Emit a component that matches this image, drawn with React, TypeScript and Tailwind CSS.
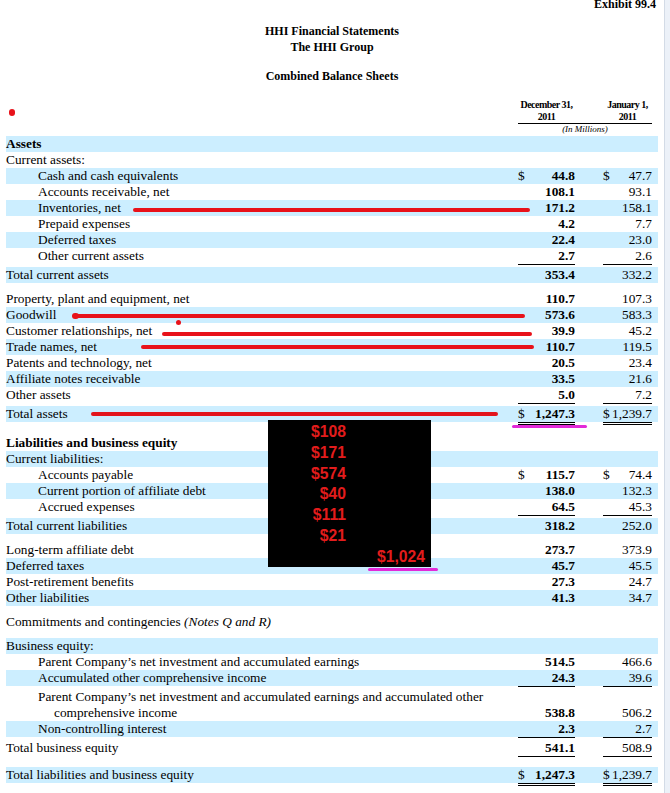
import React from "react";
import clsx from "clsx";

type Line = {
  label: React.ReactNode;
  indent?: boolean;
  bold?: boolean;
  blue?: boolean;
  a?: string;
  b?: string;
  dollar?: boolean;
  under?: "single" | "double";
  mt?: string;
  tall?: boolean;
};

const lines: Line[] = [
  { label: "Assets", bold: true, blue: true, mt: "mt-px" },
  { label: "Current assets:" },
  { label: "Cash and cash equivalents", indent: true, blue: true, a: "44.8", b: "47.7", dollar: true },
  { label: "Accounts receivable, net", indent: true, a: "108.1", b: "93.1" },
  { label: "Inventories, net", indent: true, blue: true, a: "171.2", b: "158.1" },
  { label: "Prepaid expenses", indent: true, a: "4.2", b: "7.7" },
  { label: "Deferred taxes", indent: true, blue: true, a: "22.4", b: "23.0" },
  { label: "Other current assets", indent: true, a: "2.7", b: "2.6", under: "single" },
  { label: "Total current assets", blue: true, a: "353.4", b: "332.2", mt: "mt-[2px]" },
  { label: "Property, plant and equipment, net", a: "110.7", b: "107.3", mt: "mt-2" },
  { label: "Goodwill", blue: true, a: "573.6", b: "583.3" },
  { label: "Customer relationships, net", a: "39.9", b: "45.2" },
  { label: "Trade names, net", blue: true, a: "110.7", b: "119.5" },
  { label: "Patents and technology, net", a: "20.5", b: "23.4" },
  { label: "Affiliate notes receivable", blue: true, a: "33.5", b: "21.6" },
  { label: "Other assets", a: "5.0", b: "7.2", under: "single" },
  { label: "Total assets", blue: true, a: "1,247.3", b: "1,239.7", dollar: true, under: "double", mt: "mt-[2px]" },
  { label: "Liabilities and business equity", bold: true, mt: "mt-[10px]" },
  { label: "Current liabilities:", blue: true },
  { label: "Accounts payable", indent: true, a: "115.7", b: "74.4", dollar: true },
  { label: "Current portion of affiliate debt", indent: true, blue: true, a: "138.0", b: "132.3" },
  { label: "Accrued expenses", indent: true, a: "64.5", b: "45.3", under: "single" },
  { label: "Total current liabilities", blue: true, a: "318.2", b: "252.0", mt: "mt-[2px]" },
  { label: "Long-term affiliate debt", a: "273.7", b: "373.9", mt: "mt-2" },
  { label: "Deferred taxes", blue: true, a: "45.7", b: "45.5" },
  { label: "Post-retirement benefits", a: "27.3", b: "24.7" },
  { label: "Other liabilities", blue: true, a: "41.3", b: "34.7" },
  {
    label: (
      <>
        Commitments and contingencies <i>(Notes Q and R)</i>
      </>
    ),
    mt: "mt-2",
  },
  { label: "Business equity:", blue: true, mt: "mt-2" },
  { label: "Parent Company’s net investment and accumulated earnings", indent: true, a: "514.5", b: "466.6" },
  { label: "Accumulated other comprehensive income", indent: true, blue: true, a: "24.3", b: "39.6", under: "single" },
  {
    label: (
      <>
        Parent Company’s net investment and accumulated earnings and accumulated other
        <br />
        comprehensive income
      </>
    ),
    indent: true,
    tall: true,
    a: "538.8",
    b: "506.2",
    mt: "mt-[2px]",
  },
  { label: "Non-controlling interest", indent: true, blue: true, a: "2.3", b: "2.7", under: "single" },
  { label: "Total business equity", a: "541.1", b: "508.9", under: "single", mt: "mt-[2px]" },
  {
    label: "Total liabilities and business equity",
    blue: true,
    a: "1,247.3",
    b: "1,239.7",
    dollar: true,
    under: "double",
    mt: "mt-[10px]",
  },
];

function Rule({ double }: { double: boolean }) {
  const seg = double ? "h-[3px] border-y border-black" : "h-px bg-black";
  return (
    <div className="flex">
      <div className="flex-1" />
      <div className={clsx("w-[57px]", seg)} />
      <div className="w-[28px]" />
      <div className={clsx("w-[49px]", seg)} />
      <div className="w-[6px]" />
    </div>
  );
}

function Row({ l }: { l: Line }) {
  return (
    <div className={l.mt}>
      <div
        className={clsx(
          "flex leading-4",
          l.tall ? "h-8 items-end" : "h-4 items-center",
          l.blue && "bg-[#cceeff]"
        )}
      >
        <div
          className={clsx(
            "flex-1 whitespace-nowrap",
            l.indent && (l.tall ? "pl-[48px] -indent-[16px]" : "pl-8"),
            l.bold && "font-bold"
          )}
        >
          {l.label}
        </div>
        <div className="flex w-[57px] justify-between">
          <span>{l.dollar ? "$" : ""}</span>
          <span className="font-bold">{l.a}</span>
        </div>
        <div className="w-[28px]" />
        <div className="flex w-[49px] justify-between">
          <span>{l.dollar ? "$" : ""}</span>
          <span>{l.b}</span>
        </div>
        <div className="w-[6px]" />
      </div>
      {l.under && <Rule double={l.under === "double"} />}
    </div>
  );
}

function Marks() {
  return (
    <>
      <div className="absolute left-[9px] top-[109px] h-[7px] w-[6px] rounded-full bg-[#e8121a]" />
      <div className="absolute left-[133px] top-[208px] h-1 w-[397px] rounded-full bg-[#e8121a]" />
      <div className="absolute left-[72px] top-[313px] h-[6px] w-[7px] rounded-full bg-[#e8121a]" />
      <div className="absolute left-[74px] top-[314px] h-1 w-[451px] rounded-full bg-[#e8121a]" />
      <div className="absolute left-[176px] top-[320px] h-[5px] w-[5px] rounded-full bg-[#e8121a]" />
      <div className="absolute left-[162px] top-[332px] h-1 w-[370px] rounded-full bg-[#e8121a]" />
      <div className="absolute left-[141px] top-[345px] h-1 w-[393px] rounded-full bg-[#e8121a]" />
      <div className="absolute left-[91px] top-[412px] h-1 w-[407px] rounded-full bg-[#e3141c]" />
      <div className="absolute left-[512px] top-[425px] h-[3px] w-[75px] rounded-full bg-[#e22ad8]" />

      <div className="absolute left-[268px] top-[420px] h-[147px] w-[163px] bg-black pt-[2px] font-['Liberation_Sans',sans-serif] text-[15.7px] font-bold leading-[20.8px] text-[#e31c1c]">
        <div className="w-[78px] text-right">
          <div>$108</div>
          <div>$171</div>
          <div>$574</div>
          <div>$40</div>
          <div>$111</div>
          <div>$21</div>
        </div>
        <div className="pr-[6px] text-right">$1,024</div>
      </div>
      <div className="absolute left-[368px] top-[568px] h-[3px] w-[70px] rounded-full bg-[#e22ad8]" />
    </>
  );
}

export default function App() {
  return (
    <div className="relative flex h-[793px] w-[670px] overflow-hidden bg-white font-['Liberation_Serif',serif] text-[10pt] text-black">
      <div className="w-[664px] px-[6px]">
        <p className="-mt-[3px] pr-[2px] text-right text-[12px] font-bold leading-[14px]">Exhibit 99.4</p>
        <div className="mt-3 text-center text-[12px] font-bold leading-4">
          <p>HHI Financial Statements</p>
          <p>The HHI Group</p>
          <p className="mt-[13px]">Combined Balance Sheets</p>
        </div>

        <div className="mt-[15px] flex">
          <div className="flex-1" />
          <div className="w-[134px]">
            <div className="flex border-b border-black text-[10px] font-bold leading-3 tracking-[-0.5px]">
              <div className="w-[57px] text-center">
                December 31,
                <br />
                2011
              </div>
              <div className="w-[28px]" />
              <div className="w-[49px] text-center">
                January 1,
                <br />
                2011
              </div>
            </div>
            <p className="text-center text-[9px] italic leading-[11px]">(In Millions)</p>
          </div>
          <div className="w-[6px]" />
        </div>

        {lines.map((l, i) => (
          <Row key={i} l={l} />
        ))}
      </div>
      <div className="w-[6px] border-l border-[#d3dbe6] bg-[#ecf1f8]" />
      <Marks />
    </div>
  );
}
